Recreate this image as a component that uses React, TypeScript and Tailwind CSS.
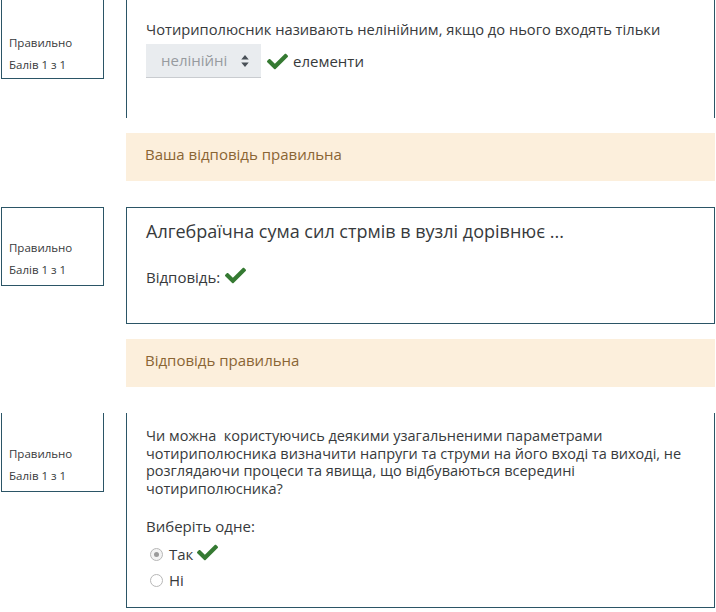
import React from "react";

const Check = ({ className = "" }: { className?: string }) => (
  <svg viewBox="0 0 512 512" className={className} fill="#357a32">
    <path d="M173.9 439.4l-166.4-166.4c-10-10-10-26.2 0-36.2l36.2-36.2c10-10 26.2-10 36.2 0L192 312.7 432.1 72.6c10-10 26.2-10 36.2 0l36.2 36.2c10 10 10 26.2 0 36.2l-294.4 294.4c-10 10-26.2 10-36.2 0z" />
  </svg>
);

const Info = ({ cls, h, top }: { cls: string; h: string; top: string }) => (
  <div className={`w-[103px] ${h} shrink-0 border-[#2b5566] pl-[7px] text-[11.5px] text-[#373a3c] ${cls}`}>
    <div className={top} />
    <div className="leading-[22px]">Правильно</div>
    <div className="leading-[22px]">Балів 1 з 1</div>
  </div>
);

const Feedback = ({ text }: { text: string }) => (
  <div className="ml-[126px] w-[589px] h-[48px] bg-[#fcefdc] pt-[10px] pl-[19px] text-[15px] leading-[22px] text-[#8a6534]">
    {text}
  </div>
);

export default function App() {
  return (
    <div
      className="w-[716px] h-[612px] overflow-hidden bg-white text-[#373a3c]"
      style={{ fontFamily: '"Open Sans", "Noto Sans", sans-serif' }}
    >
      {/* Row 1 */}
      <div className="flex items-start">
        <div className="w-[1px] shrink-0" />
        <Info cls="border-l border-r border-b" h="h-[80px] -mt-[1px]" top="h-[33px]" />
        <div className="ml-[22px] w-[589px] h-[118px] border-l border-r border-[#2b5566] pl-[19px] pt-[18px]">
          <div className="text-[14.7px] leading-[22px]">
            Чотириполюсник називають нелінійним, якщо до нього входять тільки
          </div>
          <div className="flex items-center mt-[4px]">
            <div className="w-[115px] h-[34px] bg-[#e9ecef] border-b border-[#c9ccd0] flex items-center pl-[15px] pr-[12px] text-[15px] text-[#979b9f]">
              <span className="flex-1">нелінійні</span>
              <svg viewBox="0 0 10 16" className="w-[8px] h-[12px]" fill="#495057">
                <path d="M5 0 L10 6 H0 Z M5 16 L0 10 H10 Z" />
              </svg>
            </div>
            <Check className="w-[21px] h-[21px] ml-[6px]" />
            <span className="ml-[5px] text-[15px]">елементи</span>
          </div>
        </div>
      </div>

      <div className="h-[15px]" />
      <Feedback text="Ваша відповідь правильна" />
      <div className="h-[26px]" />

      {/* Row 2 */}
      <div className="flex items-start">
        <div className="w-[1px] shrink-0" />
        <Info cls="border" h="h-[79px]" top="h-[29px]" />
        <div className="ml-[22px] w-[589px] h-[117px] border border-[#2b5566] pl-[19px] pt-[10px]">
          <div className="text-[18px] leading-[26px]">
            Алгебраїчна сума сил стрмів в вузлі дорівнює ...
          </div>
          <div className="flex items-center mt-[22px] text-[15px]">
            <span>Відповідь:</span>
            <Check className="w-[21px] h-[21px] ml-[5px] -mt-[4px]" />
          </div>
        </div>
      </div>

      <div className="h-[15px]" />
      <Feedback text="Відповідь правильна" />
      <div className="h-[26px]" />

      {/* Row 3 */}
      <div className="flex items-start">
        <div className="w-[1px] shrink-0" />
        <Info cls="border-l border-r border-b" h="h-[79px]" top="h-[30px]" />
        <div className="ml-[22px] w-[589px] h-[195px] border-l border-r border-b border-[#2b5566] pl-[19px] pr-[26px] pt-[14px]">
          <div className="text-[14.5px] leading-[17.5px]">
            Чи можна&nbsp; користуючись деякими узагальненими параметрами чотириполюсника визначити напруги та струми на його вході та виході, не розглядаючи процеси та явища, що відбуваються всередині чотириполюсника?
          </div>
          <div className="text-[15px] mt-[18px] leading-[22px]">Виберіть одне:</div>
          <div className="flex items-center mt-[5px] h-[24px] text-[15px]">
            <span className="w-[13px] h-[13px] rounded-full border border-[#b7b7b7] bg-[#f3f3f3] flex items-center justify-center ml-[4px]">
              <span className="w-[5px] h-[5px] rounded-full bg-[#9a9a9a]" />
            </span>
            <span className="ml-[6px]">Так</span>
            <Check className="w-[21px] h-[21px] ml-[4px] -mt-[4px]" />
          </div>
          <div className="flex items-center mt-[2px] h-[24px] text-[15px]">
            <span className="w-[13px] h-[13px] rounded-full border border-[#b7b7b7] bg-white ml-[4px]" />
            <span className="ml-[6px]">Ні</span>
          </div>
        </div>
      </div>
    </div>
  );
}
